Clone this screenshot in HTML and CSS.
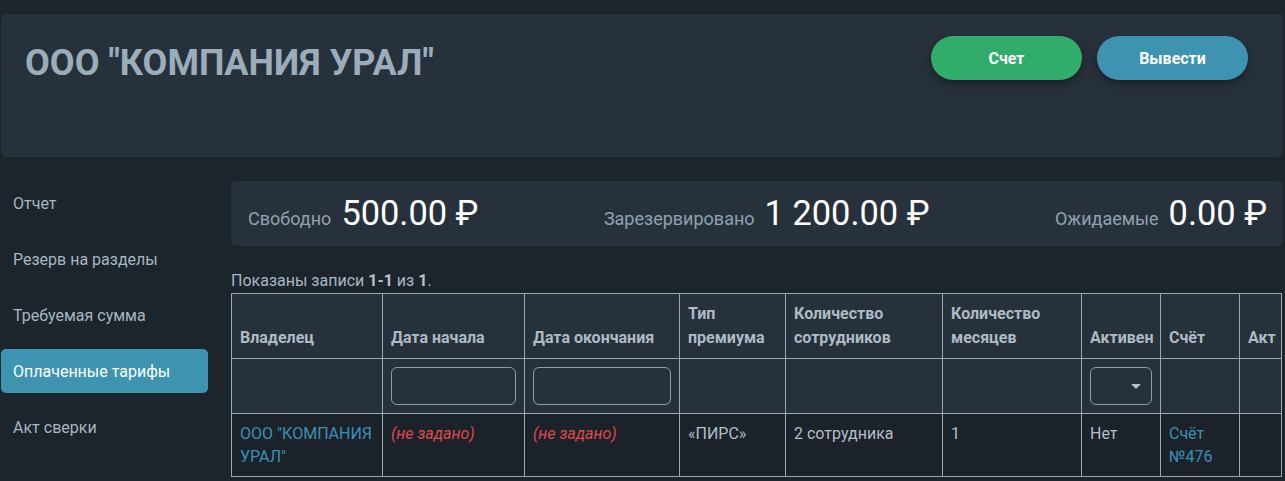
FILE: index.html
```html
<!DOCTYPE html>
<html lang="ru">
<head>
<meta charset="utf-8">
<title>ООО "КОМПАНИЯ УРАЛ"</title>
<link rel="stylesheet" href="styles.css">
</head>
<body>
<div class="page">
  <header class="header">
    <h1 class="title">ООО "КОМПАНИЯ УРАЛ"</h1>
    <div class="actions">
      <button class="btn btn-green">Счет</button>
      <button class="btn btn-blue">Вывести</button>
    </div>
  </header>
  <div class="body">
    <nav class="sidebar">
      <a class="nav-item">Отчет</a>
      <a class="nav-item">Резерв на разделы</a>
      <a class="nav-item">Требуемая сумма</a>
      <a class="nav-item active">Оплаченные тарифы</a>
      <a class="nav-item">Акт сверки</a>
    </nav>
    <main class="main">
      <div class="stats">
        <div class="stat"><span class="stat-label">Свободно</span><span class="stat-value">500.00 ₽</span></div>
        <div class="stat"><span class="stat-label">Зарезервировано</span><span class="stat-value">1 200.00 ₽</span></div>
        <div class="stat"><span class="stat-label">Ожидаемые</span><span class="stat-value">0.00 ₽</span></div>
      </div>
      <div class="summary">Показаны записи <b>1-1</b> из <b>1</b>.</div>
      <table class="grid">
        <thead>
          <tr class="head-row">
            <th class="c1">Владелец</th>
            <th class="c2">Дата начала</th>
            <th class="c3">Дата окончания</th>
            <th class="c4">Тип премиума</th>
            <th class="c5">Количество сотрудников</th>
            <th class="c6">Количество месяцев</th>
            <th class="c7">Активен</th>
            <th class="c8">Счёт</th>
            <th class="c9">Акт</th>
          </tr>
          <tr class="filter-row">
            <td></td>
            <td><input class="filter-input" type="text"></td>
            <td><input class="filter-input" type="text"></td>
            <td></td>
            <td></td>
            <td></td>
            <td><div class="filter-select"><span class="caret"></span></div></td>
            <td></td>
            <td></td>
          </tr>
        </thead>
        <tbody>
          <tr class="data-row">
            <td><a class="link">ООО "КОМПАНИЯ УРАЛ"</a></td>
            <td><span class="not-set">(не задано)</span></td>
            <td><span class="not-set">(не задано)</span></td>
            <td>«ПИРС»</td>
            <td>2 сотрудника</td>
            <td>1</td>
            <td>Нет</td>
            <td><a class="link">Счёт №476</a></td>
            <td></td>
          </tr>
        </tbody>
      </table>
    </main>
  </div>
</div>
</body>
</html>
```

FILE: styles.css
```css
* { box-sizing: border-box; }

html, body {
  margin: 0;
  background: #1c242c;
  font-family: Roboto, "Noto Sans", sans-serif;
  color: #a9b7c2;
}

.page {
  padding: 14px 2px 0 1px;
}

.header {
  height: 143px;
  background: #27313b;
  border-radius: 5px;
  display: flex;
  justify-content: space-between;
  align-items: flex-start;
  padding: 22px 35px 0 24px;
}

.title {
  margin: 7px 0 0;
  font-family: Roboto, sans-serif;
  font-weight: bold;
  font-size: 36px;
  line-height: 41px;
  color: #9badbb;
}

.actions {
  display: flex;
  gap: 15px;
}

.btn {
  width: 151px;
  height: 44px;
  border: none;
  border-radius: 22px;
  color: #fff;
  font-family: Roboto, sans-serif;
  font-weight: bold;
  font-size: 16px;
  box-shadow: 0 4px 8px rgba(0, 0, 0, 0.35);
}

.btn-green { background: #31ac6b; }
.btn-blue { background: #3d93b0; }

.body {
  display: flex;
  gap: 23px;
  margin-top: 23px;
}

.sidebar {
  width: 207px;
  flex: none;
  display: flex;
  flex-direction: column;
  gap: 12px;
  padding-top: 1px;
}

.nav-item {
  height: 44px;
  display: flex;
  align-items: center;
  padding-left: 12px;
  font-size: 16px;
  color: #a7b6c1;
  border-radius: 5px;
}

.nav-item.active {
  background: #3d93b0;
  color: #fff;
}

.main {
  flex: 1;
  min-width: 0;
  padding-top: 1px;
}

.stats {
  height: 65px;
  background: #27313b;
  border-radius: 5px;
  display: flex;
  justify-content: space-between;
  align-items: baseline;
  padding: 12px 16px 0 17px;
}

.stat {
  display: flex;
  align-items: baseline;
  gap: 10px;
}

.stat-label {
  font-size: 18px;
  color: #8ea2b0;
}

.stat-value {
  font-size: 34.4px;
  line-height: 41px;
  color: #fff;
}

.summary {
  margin-top: 23px;
  font-size: 16px;
  line-height: 24px;
  color: #a9b7c2;
}

.summary b {
  font-weight: bold;
  color: #b7c3cc;
}

.grid {
  width: 1050px;
  table-layout: fixed;
  border-collapse: collapse;
  font-size: 16px;
  line-height: 24px;
}

.grid th, .grid td {
  border: 1px solid #9aa6b0;
  padding: 8px 8px;
  text-align: left;
}

.grid th {
  vertical-align: bottom;
  font-weight: bold;
  color: #aebbc5;
}

.head-row, .filter-row {
  background: #27313b;
}

.data-row {
  background: #1b222a;
}

.data-row td {
  vertical-align: top;
  color: #b3bfc8;
  line-height: 23px;
}

.c1 { width: 151px; }
.c2 { width: 142px; }
.c3 { width: 155px; }
.c4 { width: 106px; }
.c5 { width: 157px; }
.c6 { width: 139px; }
.c7 { width: 79px; }
.c8 { width: 79px; }
.c9 { width: 42px; }

.filter-input {
  display: block;
  width: 100%;
  height: 38px;
  background: transparent;
  border: 1px solid #8f9ca6;
  border-radius: 6px;
}

.filter-select {
  position: relative;
  width: 100%;
  height: 38px;
  border: 1px solid #8f9ca6;
  border-radius: 6px;
}

.caret {
  position: absolute;
  right: 10px;
  top: 16px;
  width: 0;
  height: 0;
  border-left: 5px solid transparent;
  border-right: 5px solid transparent;
  border-top: 5px solid #b6c0c8;
}

.link {
  color: #3a91b6;
}

.not-set {
  color: #e04848;
  font-style: italic;
}
```
